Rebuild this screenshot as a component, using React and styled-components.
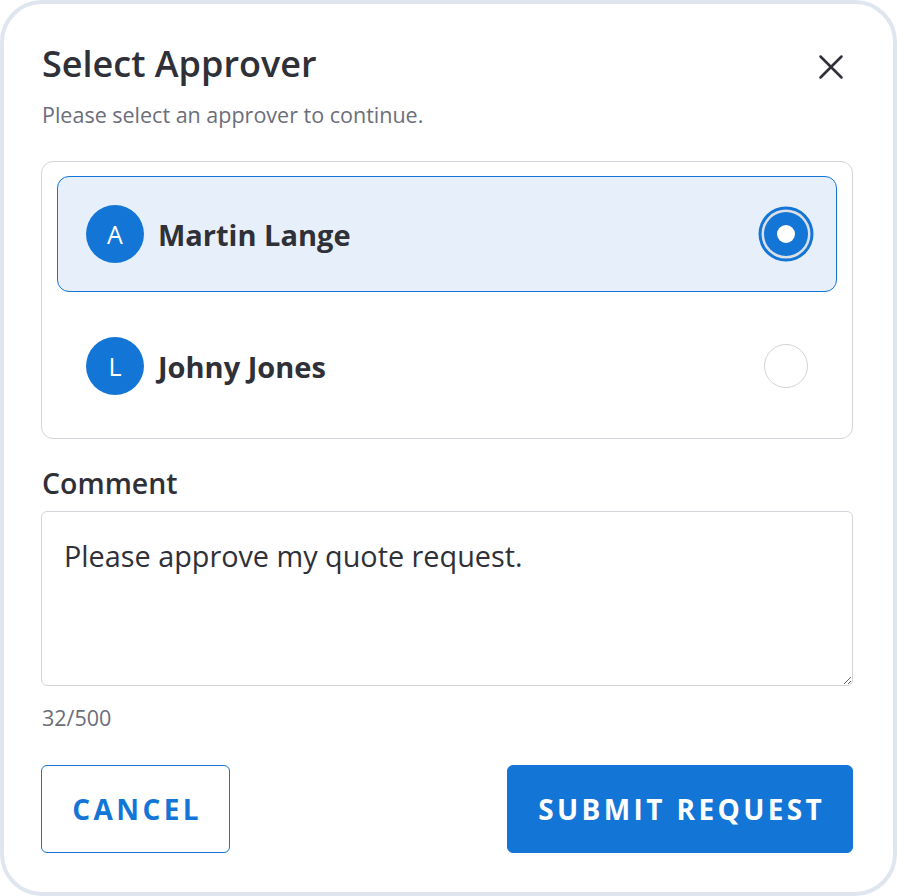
import styled, { createGlobalStyle } from "styled-components"

const GlobalStyle = createGlobalStyle`
  * { box-sizing: border-box; }
  html, body { margin: 0; padding: 0; background: #ffffff; }
  body { font-family: "Open Sans", "Noto Sans", sans-serif; }
`

const Dialog = styled.div`
  width: 897px;
  height: 896px;
  border: 4px solid #dfe6ef;
  border-radius: 42px;
  background: #ffffff;
  padding: 38px 40px 0 37px;
  display: flex;
  flex-direction: column;
  color: #2f3038;
`

const Header = styled.div`
  display: flex;
  justify-content: space-between;
  align-items: flex-start;
  padding-left: 1px;
`

const Title = styled.h1`
  margin: 0;
  font-size: 36px;
  font-weight: 600;
  line-height: 44px;
  color: #2f3038;
`

const CloseButton = styled.button`
  border: none;
  background: none;
  padding: 0;
  margin: 10px 7px 0 0;
  width: 30px;
  height: 30px;
  display: flex;
  align-items: center;
  justify-content: center;
  color: #2f3038;
  cursor: pointer;
`

const Subtitle = styled.p`
  margin: 16px 0 0 1px;
  font-size: 21.5px;
  line-height: 26px;
  color: #6b6e7a;
`

const ApproverList = styled.div`
  margin-top: 33px;
  border: 1px solid #d3d4da;
  border-radius: 12px;
  padding: 14px 15px;
  display: flex;
  flex-direction: column;
  gap: 16px;
`

const ApproverRow = styled.label`
  height: 116px;
  display: flex;
  align-items: center;
  padding: 0 22px 0 28px;
  border-radius: 12px;
  border: 1px solid ${p => (p.$selected ? "#1376d6" : "transparent")};
  background: ${p => (p.$selected ? "#e7f0fa" : "transparent")};
  cursor: pointer;
`

const Avatar = styled.div`
  width: 58px;
  height: 58px;
  border-radius: 50%;
  background: #1376d6;
  color: #ffffff;
  font-size: 25px;
  display: flex;
  align-items: center;
  justify-content: center;
  flex-shrink: 0;
`

const Name = styled.span`
  margin-left: 14px;
  font-size: 29px;
  font-weight: 700;
  flex: 1;
`

const Radio = styled.span`
  width: 44px;
  height: 44px;
  border-radius: 50%;
  margin-right: 6px;
  display: flex;
  align-items: center;
  justify-content: center;
  background: ${p => (p.$checked ? "#1376d6" : "#ffffff")};
  border: ${p => (p.$checked ? "none" : "1.5px solid #d3d4da")};
  box-shadow: ${p =>
    p.$checked ? "0 0 0 2.5px #dcdfe6, 0 0 0 5.5px #1376d6" : "none"};
`

const RadioDot = styled.span`
  width: 18px;
  height: 18px;
  border-radius: 50%;
  background: #ffffff;
`

const FieldLabel = styled.div`
  margin: 26px 0 0 1px;
  font-size: 28.5px;
  font-weight: 600;
  line-height: 36px;
`

const CommentBox = styled.textarea`
  margin-top: 10px;
  width: 100%;
  height: 175px;
  border: 1px solid #d3d4da;
  border-radius: 6px;
  padding: 26px 22px 22px;
  font-family: "Open Sans", "Noto Sans", sans-serif;
  font-size: 28.8px;
  line-height: 36px;
  color: #2f3038;
  resize: vertical;
  outline: none;
`

const Counter = styled.div`
  margin: 19px 0 0 1px;
  font-size: 21.5px;
  line-height: 26px;
  color: #6b6e7a;
`

const Actions = styled.div`
  margin-top: 34px;
  display: flex;
  justify-content: space-between;
`

const Button = styled.button`
  height: 88px;
  width: ${p => (p.$primary ? "346px" : "189px")};
  padding: 0 0 0 3.4px;
  border-radius: 6px;
  border: 1px solid #1376d6;
  background: ${p => (p.$primary ? "#1376d6" : "#ffffff")};
  color: ${p => (p.$primary ? "#ffffff" : "#1376d6")};
  font-family: "Open Sans", "Noto Sans", sans-serif;
  font-size: 28px;
  font-weight: 700;
  letter-spacing: 3.4px;
  cursor: pointer;
`

const approvers = [
  { initial: "A", name: "Martin Lange", selected: true },
  { initial: "L", name: "Johny Jones", selected: false },
]

const App = () => {
  return (
    <>
      <GlobalStyle />
      <Dialog>
        <Header>
          <Title>Select Approver</Title>
          <CloseButton aria-label="Close">
            <svg width="28" height="28" viewBox="0 0 24 24" fill="none" stroke="currentColor" strokeWidth="2.2" strokeLinecap="round">
              <path d="M3 3L21 21M21 3L3 21" />
            </svg>
          </CloseButton>
        </Header>
        <Subtitle>Please select an approver to continue.</Subtitle>
        <ApproverList>
          {approvers.map(a => (
            <ApproverRow key={a.name} $selected={a.selected}>
              <Avatar>{a.initial}</Avatar>
              <Name>{a.name}</Name>
              <Radio $checked={a.selected}>{a.selected && <RadioDot />}</Radio>
            </ApproverRow>
          ))}
        </ApproverList>
        <FieldLabel>Comment</FieldLabel>
        <CommentBox defaultValue="Please approve my quote request." />
        <Counter>32/500</Counter>
        <Actions>
          <Button>CANCEL</Button>
          <Button $primary>SUBMIT REQUEST</Button>
        </Actions>
      </Dialog>
    </>
  )
}

export default App
